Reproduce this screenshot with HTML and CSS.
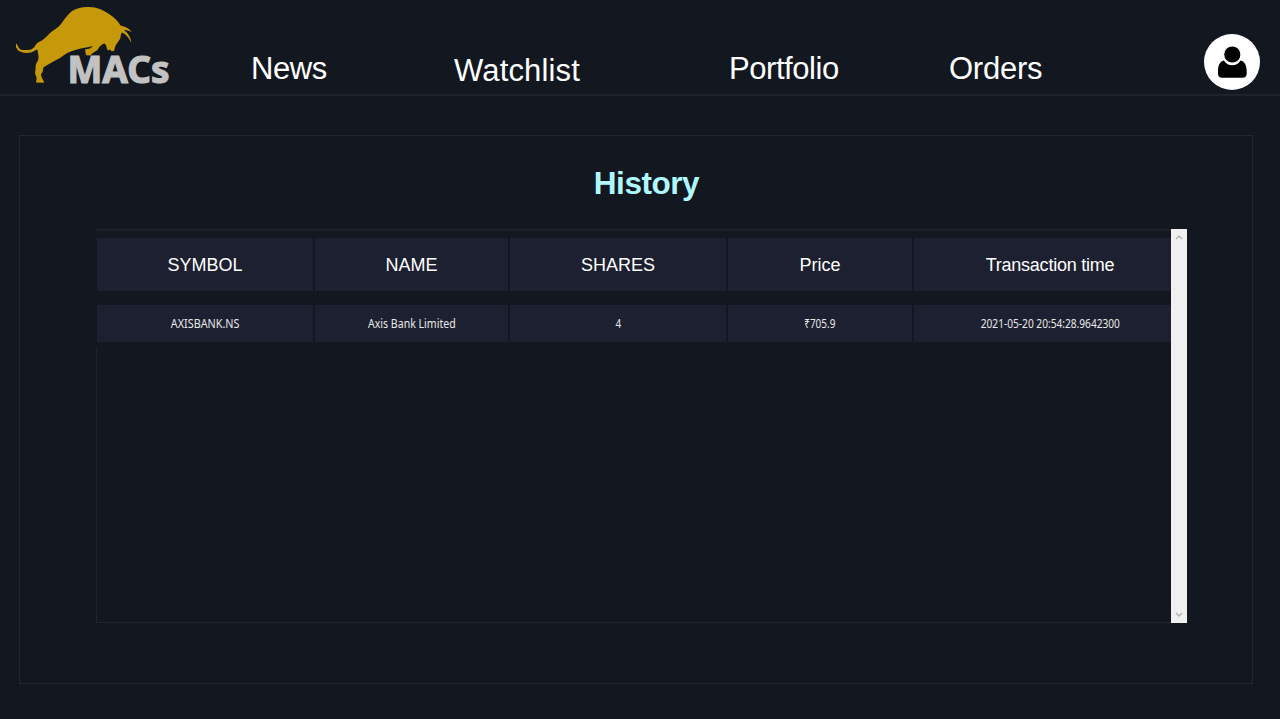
FILE: index.html
```html
<!DOCTYPE html>
<html lang="en">
<head>
<meta charset="utf-8">
<title>MACs - History</title>
<link rel="stylesheet" href="styles.css">
</head>
<body>
<header class="topbar">
  <svg class="logo" viewBox="0 0 180 94" role="img" aria-label="MACs">
    <path fill="#c6990a" d="M16 43.500 C18 44.500 18 48 20.500 49.500 C23 50.500 28 50 31 49.500 C35 48 35 44 39 42 C43 40.500 46 37 50 33 C53 30 58 28 61 24 C64 20 67 15 72 11 C77 8 83 6.700 89 7 C97 7 103 10 109 14 C114 17 118 21 120.500 25.500 C125 26.500 129 28 131.700 32 C129 30.500 126 30 124 30 C128 33 131 38 131.500 43 C129 38 126 34 122 32.500 C120.500 34 121 36 120 39 C118 42 117 43 116 45 C114.500 47 115 49 114 51 L111.500 51.300 L110 49.500 L108 50.500 C106 48 107 45 104.500 43.500 C102 44 99 47 97.500 50 C95 52 92 53 90.500 55.500 L86 55.300 L85 49.500 L90 48.500 L93 46 C87 48 82 47.500 77 49.500 C70 51 65 54 60 58 C54 61 49 64 44 67 C42 69 44 72 41 74 C41 76 42 79 44 81.500 L43.500 82.700 L36 82.500 L36.700 78 L35 73 C36 69 35 66 36.500 63 C40 59 38 54 37.500 50 C36 49 34 52 31 52.500 C27 53.500 22 53 19 51 C17 50 17.500 48.500 16 47.500 Z"/>
    <text class="logo-text" x="67.500" y="82.500" textLength="102" lengthAdjust="spacingAndGlyphs">MACs</text>
  </svg>
  <nav class="nav">
    <a class="nav-news">News</a>
    <a class="nav-watchlist">Watchlist</a>
    <a class="nav-portfolio">Portfolio</a>
    <a class="nav-orders">Orders</a>
  </nav>
  <svg class="avatar" viewBox="0 0 56 56" role="img" aria-label="Profile">
    <circle cx="28" cy="28" r="28" fill="#fff"/>
    <path d="M20 26.500 C22 30 25 31.300 28.300 31.300 C31.500 31.300 34.500 30 36.500 26.500 C41 27.500 42.700 32 42.700 37 V39.500 C42.700 42.500 41 43.700 38.500 43.700 H18.200 C15.500 43.700 14 42.500 14 39.500 V37 C14 32 15.500 27.500 20 26.500 Z"/>
    <circle cx="28.300" cy="20.500" r="8.700" stroke="#fff" stroke-width="1.200"/>
  </svg>
</header>
<main class="panel">
  <h1 class="title">History</h1>
  <section class="history">
    <div class="table">
      <div class="row head">
        <div>SYMBOL</div><div>NAME</div><div>SHARES</div><div>Price</div><div class="time-head">Transaction time</div>
      </div>
      <div class="row data">
        <div><span class="t-symbol">AXISBANK.NS</span></div><div><span class="t-name">Axis Bank Limited</span></div><div><span class="t-price">4</span></div><div><span class="t-price">₹705.9</span></div><div><span class="t-time">2021-05-20 20:54:28.9642300</span></div>
      </div>
      <div class="empty"></div>
    </div>
    <div class="scrollbar">
      <svg viewBox="0 0 8 6"><path d="M1 5 L4 2 L7 5"/></svg>
      <svg viewBox="0 0 8 6"><path d="M1 1 L4 4 L7 1"/></svg>
    </div>
  </section>
</main>
</body>
</html>
```
FILE: styles.css
```css
* { box-sizing: border-box; }
body {
  margin: 0;
  height: 719px;
  overflow: hidden;
  background: #131720;
  color: #fff;
  font-family: "Liberation Sans", Arial, sans-serif;
}
.topbar {
  display: flex;
  height: 96px;
  border-bottom: 2px solid #1e222b;
}
.logo { width: 180px; height: 94px; flex: none; }
.logo-text {
  font: 700 37px "Noto Sans", sans-serif;
  fill: #c2c2c2;
  stroke: #c2c2c2;
  stroke-width: 1.200px;
}
.nav {
  flex: 1;
  display: grid;
  grid-template-columns: 203px 275px 220px 1fr;
  padding-left: 71px;
  font-size: 31px;
  line-height: 36px;
  white-space: nowrap;
}
.nav a { padding-top: 51px; }
.nav .nav-news { letter-spacing: -0.400px; }
.nav .nav-watchlist { padding-top: 53px; letter-spacing: 0.150px; }
.nav .nav-portfolio { letter-spacing: -0.450px; }
.nav .nav-orders { letter-spacing: -0.250px; }
.avatar { width: 56px; height: 56px; margin: 34px 20px 0 0; flex: none; }
.panel {
  margin: 39px 27px 0 19px;
  height: 549px;
  border: 1px solid #232730;
  padding: 28px 65px 0 76px;
}
.title {
  margin: 0;
  padding-left: 10px;
  height: 65px;
  font-size: 31.500px;
  letter-spacing: -0.450px;
  line-height: 39px;
  text-align: center;
  color: #aff8ff;
}
.history { display: flex; height: 394px; }
.table {
  flex: 1;
  display: flex;
  flex-direction: column;
  border-top: 2px solid #1c2029;
  padding-top: 7px;
}
.row {
  display: grid;
  grid-template-columns: 216px 193px 216px 184px 1fr;
  gap: 2px;
  padding-left: 1px;
}
.row div {
  display: flex;
  align-items: center;
  justify-content: center;
  background: #1d2030;
  white-space: nowrap;
}
.row div:last-child { padding-left: 15px; }
.head { height: 53px; font-size: 18px; }
.row.head div { padding-top: 1px; }
.head .time-head { letter-spacing: -0.230px; }
.data {
  height: 37px;
  margin-top: 14px;
  font-family: "Noto Sans", sans-serif;
  font-size: 12px;
  color: #e8e8e8;
}
.t-symbol { transform: scaleX(0.900); }
.t-name { transform: scaleX(0.880); }
.t-price { transform: scaleX(0.830); }
.t-time { transform: scaleX(0.845); }
.empty {
  flex: 1;
  margin-top: 6px;
  border: solid #20242d;
  border-width: 0 0 1px 1px;
}
.scrollbar {
  width: 16px;
  display: flex;
  flex-direction: column;
  justify-content: space-between;
  align-items: center;
  padding: 5px 0 5px;
  background: #f0f0f0;
}
.scrollbar svg { width: 8px; height: 6px; fill: none; stroke: #b5b5b5; stroke-width: 1.500; }
```
